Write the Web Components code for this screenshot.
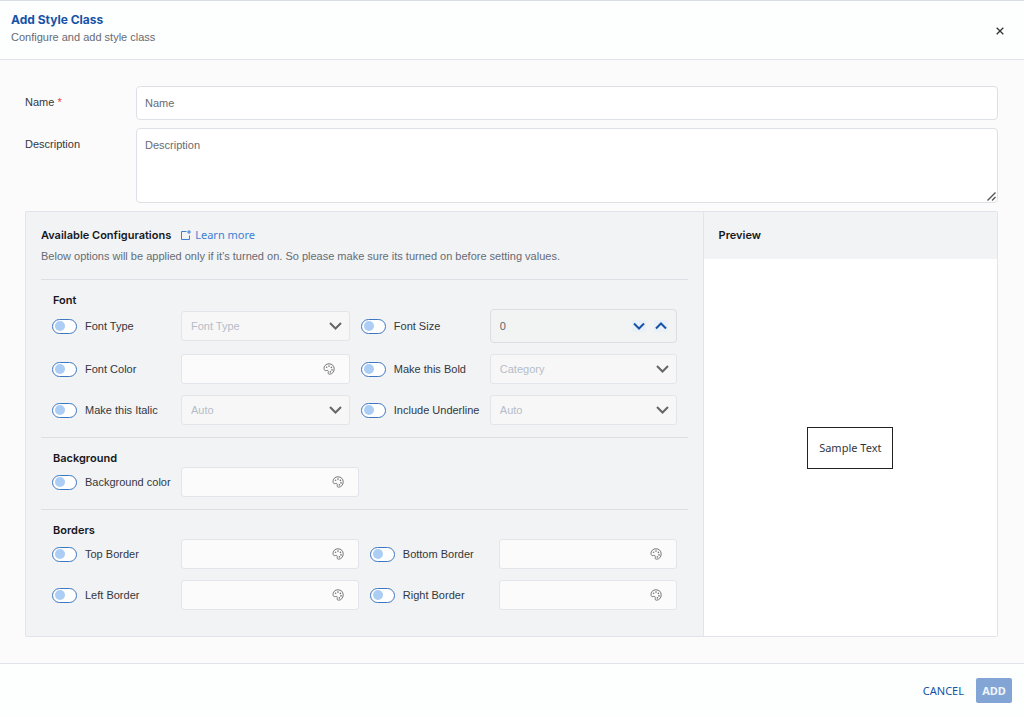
<!DOCTYPE html>
<html lang="en">
<head>
<meta charset="utf-8">
<meta name="viewport" content="width=device-width, initial-scale=1">
<title>Add Style Class</title>
<style>
  html, body { height: 100%; }
  body {
    margin: 0;
    --blue: #1653a6;
    --line: #e1e4e9;
    --panel: #f2f3f5;
    --ink: #33373d;
    --muted: #666b73;
    --heading-font: Inter, "Liberation Sans", sans-serif;
    font: 11px/16px "Liberation Sans", Arial, sans-serif;
    color: var(--ink);
    background: #fbfbfc;
  }
</style>
</head>
<body>
<style-dialog>
  <form-row label="Name" required placeholder="Name"></form-row>
  <form-row label="Description" multiline placeholder="Description"></form-row>
  <config-panel>
    <config-section heading="Font" layout="uneven">
      <option-field label="Font Type" kind="select" value="Font Type"></option-field>
      <option-field label="Font Size" kind="number" value="0"></option-field>
      <option-field label="Font Color" kind="color"></option-field>
      <option-field label="Make this Bold" kind="select" value="Category"></option-field>
      <option-field label="Make this Italic" kind="select" value="Auto"></option-field>
      <option-field label="Include Underline" kind="select" value="Auto"></option-field>
    </config-section>
    <config-section heading="Background">
      <option-field label="Background color" kind="color"></option-field>
    </config-section>
    <config-section heading="Borders">
      <option-field label="Top Border" kind="color"></option-field>
      <option-field label="Bottom Border" kind="color"></option-field>
      <option-field label="Left Border" kind="color"></option-field>
      <option-field label="Right Border" kind="color"></option-field>
    </config-section>
    <style-preview slot="preview">Sample Text</style-preview>
  </config-panel>
</style-dialog>

<script>
const define = (name, render) => customElements.define(name, class extends HTMLElement {
  constructor() {
    super();
    this.attachShadow({ mode: 'open' });
  }
  connectedCallback() {
    this.shadowRoot.innerHTML =
      '<style>*{box-sizing:border-box}h1,h2,h3,p{margin:0}h1,h2,h3{font-family:var(--heading-font)}button,input,select,textarea{font:inherit;color:inherit;margin:0}</style>' + render(this);
  }
});

define('style-dialog', () => `
  <style>
    :host { display: flex; flex-direction: column; min-height: 100vh; box-sizing: border-box; border-top: 1px solid #d9dde6; }
    header, footer { background: #fdfefe; display: flex; }
    header { justify-content: space-between; align-items: flex-end; padding: 10px 17px 13px 11px; border-bottom: 1px solid var(--line); }
    h1 { font-size: 12px; line-height: 18px; font-weight: 700; color: var(--blue); }
    header p { color: var(--muted); line-height: 17px; }
    header button { border: 0; background: none; padding: 0; width: 14px; height: 30px; display: grid; place-items: center; }
    main { flex: 1; display: flex; flex-direction: column; gap: 8px; padding: 26px 26px 26px 25px; }
    footer { align-items: center; justify-content: flex-end; gap: 12px; padding: 14px 12px 13px; border-top: 1px solid var(--line);
      font-family: "Noto Sans", sans-serif; }
    footer button { border: 0; border-radius: 2px; height: 25px; padding: 0; }
    .cancel { background: none; color: var(--blue); }
    .add { background: #83a5d5; color: #f1f5fb; font-weight: 700; width: 36px; }
  </style>
  <header>
    <div><h1>Add Style Class</h1><p>Configure and add style class</p></div>
    <button type="button" aria-label="Close">
      <svg width="8" height="8" viewBox="0 0 8 8" fill="none" stroke="#333" stroke-width="1.3"><path d="M.7.7l6.6 6.6M7.3.7L.7 7.3"/></svg>
    </button>
  </header>
  <main><slot></slot></main>
  <footer>
    <button type="button" class="cancel">CANCEL</button>
    <button type="button" class="add">ADD</button>
  </footer>`);

define('form-row', el => `
  <style>
    :host { display: grid; grid-template-columns: 111px minmax(0, 1fr); }
    label { padding-top: 8px; }
    .required { color: #ee3b3b; }
    .control { display: block; width: 100%; border: 1px solid #dde0e5; border-radius: 4px; background: #fff; padding: 8px; outline: 0; }
    input.control { height: 34px; }
    textarea.control { height: 75px; resize: none; }
    .control::placeholder { color: var(--muted); opacity: 1; }
    .box { display: grid; }
    .box > * { grid-area: 1 / 1; }
    svg { place-self: end; margin: 0 2px 2px 0; pointer-events: none; }
  </style>
  <label for="control">${el.getAttribute('label')}${el.hasAttribute('required') ? ' <span class="required">*</span>' : ''}</label>
  <div class="box">${el.hasAttribute('multiline')
    ? `<textarea id="control" class="control" placeholder="${el.getAttribute('placeholder')}"></textarea>
       <svg width="9" height="9" viewBox="0 0 9 9" fill="none" stroke="#555" stroke-width="1.4"><path d="M.5 8.5l8-8M5 8.5L8.500 5"/></svg>`
    : `<input id="control" class="control" type="text" placeholder="${el.getAttribute('placeholder')}">`}</div>`);

define('config-panel', () => `
  <style>
    :host { display: grid; grid-template-columns: minmax(0, 679fr) minmax(0, 294fr); flex: 1;
      border: 1px solid var(--line); border-radius: 2px; background: var(--panel); }
    .settings { padding: 14px 15px; border-right: 1px solid var(--line); }
    .title { display: flex; gap: 10px; align-items: center; height: 18px; }
    h2 { font-size: 11px; font-weight: 600; color: #16181c; }
    a { display: inline-flex; align-items: center; gap: 4px; color: #3d7fd3; text-decoration: none; font-family: "Noto Sans", sans-serif; }
    p { color: var(--muted); line-height: 18px; padding: 3px 0 14px; }
  </style>
  <div class="settings">
    <div class="title">
      <h2>Available Configurations</h2>
      <a href="#learn-more">
        <svg width="10" height="10" viewBox="0 0 10 10" fill="none" stroke="currentColor"><path d="M5.500 1.500H.5v8h8V5.500"/><path d="M8 0v4M6 2h4"/></svg>
        Learn more</a>
    </div>
    <p>Below options will be applied only if it’s turned on. So please make sure its turned on before setting values.</p>
    <slot></slot>
  </div>
  <slot name="preview"></slot>`);

define('config-section', el => `
  <style>
    :host { display: block; border-top: 1px solid #dcdfe4; padding: 11px 11px 12px; }
    h3 { font-size: 11px; line-height: 18px; font-weight: 600; color: #16181c; padding-left: 1px; }
    .fields { display: grid; gap: 11px; align-items: center;
      grid-template-columns: ${el.getAttribute('layout') === 'uneven' ? 'minmax(0, 298fr) minmax(0, 316fr)' : 'repeat(2, minmax(0, 1fr))'}; }
  </style>
  <section><h3>${el.getAttribute('heading')}</h3><div class="fields"><slot></slot></div></section>`);

const chevron = (points, size, color, width) =>
  `<svg width="${size}" height="8" viewBox="0 0 ${size} 8" fill="none" stroke="${color}" stroke-width="${width}"><path d="${points}"/></svg>`;

const palette = `<svg width="12" height="12" viewBox="0 0 12 12" fill="none" stroke="#777" stroke-width="1">
  <path d="M1.200 6.500C.3 3 3.200.8 6 .8c3 0 5.200 2 5.200 5.100 0 3-2 5.200-4.600 5.300-2 .1-1.200-1.500-1.300-2.800C5.200 7 3.800 7.400 3 7.600c-1 .2-1.600-.2-1.800-1.100z"/>
  <g fill="#777" stroke="none"><circle cx="3.600" cy="4.300" r=".8"/><circle cx="6" cy="3.100" r=".8"/><circle cx="8.400" cy="4.400" r=".8"/><circle cx="9" cy="6.900" r=".8"/><circle cx="7.400" cy="8.900" r=".8"/></g></svg>`;

const controls = {
  select: (label, value) => `
    <select aria-label="${label} value" disabled><option>${value}</option></select>
    <span class="icon select-icon">${chevron('M1 1l5.500 5.500L12 1', 13, '#666', 2)}</span>`,
  color: label => `
    <input class="color" type="text" aria-label="${label} value" disabled>
    <span class="icon color-icon">${palette}</span>`,
  number: (label, value) => `
    <input class="number" type="text" inputmode="numeric" aria-label="${label} value" value="${value}">
    <span class="icon steps">
      <button type="button" aria-label="Decrease">${chevron('M1 1.500l5 5 5-5', 12, '#1653a6', 2)}</button>
      <button type="button" aria-label="Increase">${chevron('M1 6.500l5-5 5 5', 12, '#1653a6', 2)}</button>
    </span>`
};

define('option-field', el => {
  const label = el.getAttribute('label');
  return `
  <style>
    :host { display: grid; grid-template-columns: 129px minmax(0, 1fr); align-items: center; }
    .toggle { display: flex; align-items: center; gap: 8px; white-space: nowrap; }
    input[type=checkbox] { appearance: none; width: 25px; height: 15px; border: 1px solid #3f76c0; border-radius: 8px; background: #fff; display: flex; align-items: center; padding: 0 2px; flex: none; }
    input[type=checkbox]::before { content: ""; width: 10px; height: 10px; border-radius: 50%; background: #accdf4; }
    input[type=checkbox]:checked { justify-content: flex-end; }
    .control { display: grid; align-items: center; }
    .control > * { grid-area: 1 / 1; }
    select, .color, .number { width: 100%; height: 30px; border: 1px solid #e2e5ea; border-radius: 3px; background: #f7f7f8; padding: 0 9px; outline: 0; }
    select { appearance: none; color: #b5bdc7; opacity: 1; }
    .color { background: #fbfbfb; }
    .number { height: 34px; border-color: #dadde2; border-radius: 4px; background: #f2f3f3; color: #5f646b; }
    .icon { justify-self: end; display: flex; pointer-events: none; }
    .select-icon { margin-right: 8px; }
    .color-icon { margin-right: 15px; }
    .steps { margin-right: 9px; gap: 8px; pointer-events: auto; }
    .steps button { border: 0; padding: 2px 1px; background: #eaf0f7; display: flex; }
  </style>
  <div class="toggle"><input type="checkbox" id="toggle"><label for="toggle">${label}</label></div>
  <div class="control">${controls[el.getAttribute('kind')](label, el.getAttribute('value'))}</div>`;
});

define('style-preview', () => `
  <style>
    :host { display: flex; flex-direction: column; background: #fff; }
    h2 { font-size: 11px; line-height: 16px; font-weight: 600; color: #16181c; background: var(--panel); padding: 15px 15px 16px; }
    .stage { flex: 1; display: grid; place-items: center; }
    .sample { border: 1px solid #222; padding: 11px; line-height: 18px; font-family: "Noto Sans", sans-serif; }
  </style>
  <h2>Preview</h2>
  <div class="stage"><div class="sample"><slot></slot></div></div>`);
</script>
</body>
</html>
